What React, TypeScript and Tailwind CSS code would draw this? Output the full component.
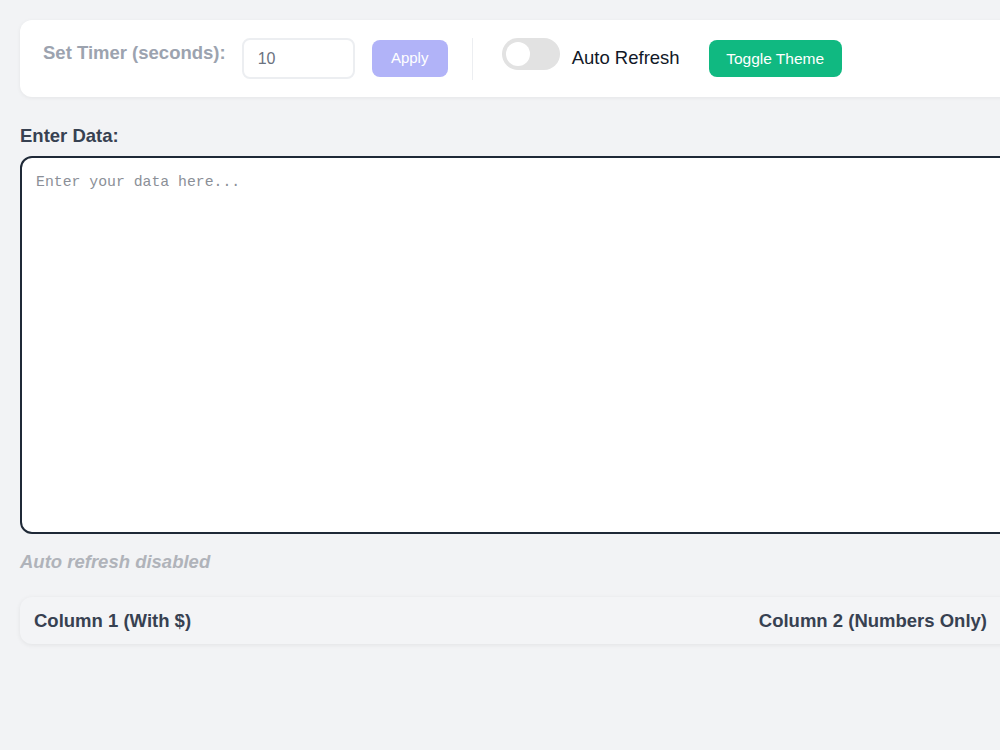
export default function App() {
  return (
    <div className="min-h-screen w-full overflow-hidden bg-[#f2f3f5] pl-5 pt-5 font-['Liberation_Sans',Arial,sans-serif]">
      <div className="w-[1010px]">
        <div className="flex h-[77px] items-center rounded-xl bg-white pl-[23px] shadow-[0_1px_4px_rgba(0,0,0,0.06)]">
          <span className="mb-[12px] text-[18.5px] font-bold text-[#9ca3af]">Set Timer (seconds):</span>
          <input
            defaultValue="10"
            className="ml-[16px] h-[41px] w-[113px] rounded-lg border-2 border-[#eceef1] px-[14px] text-[16px] text-[#6b7280] outline-none"
          />
          <button className="ml-[17px] h-[37px] w-[76px] rounded-lg bg-[#b1b3f8] text-[15px] text-white">
            Apply
          </button>
          <div className="ml-[24px] h-[42px] w-px bg-[#eceef1]" />
          <div className="mb-[10px] ml-[29px] flex h-[32px] w-[58px] items-center rounded-full bg-[#e2e2e2] px-[4px]">
            <div className="h-[24px] w-[24px] rounded-full bg-white" />
          </div>
          <span className="mb-[2px] ml-[12px] text-[18.5px] text-[#111827]">Auto Refresh</span>
          <button className="ml-[29px] h-[37px] w-[133px] rounded-lg bg-[#10b981] text-[15.5px] text-white">
            Toggle Theme
          </button>
        </div>

        <div className="mt-[28px] text-[18.5px] font-bold leading-[22px] text-[#374151]">Enter Data:</div>
        <textarea
          placeholder="Enter your data here..."
          className="mt-[9px] block h-[378px] w-full resize-none rounded-xl border-2 border-[#1f2937] bg-white px-[14px] py-[13px] font-['Liberation_Mono',monospace] text-[14.8px] placeholder:text-[#8b8f97] outline-none"
        />
        <div className="mt-[17px] text-[18.5px] font-bold italic leading-[22px] text-[#b0b3ba]">Auto refresh disabled</div>

        <div className="mt-[24px] flex h-[47px] items-center justify-between rounded-xl bg-[#f3f4f6] pl-[14px] pr-[43px] shadow-[0_1px_5px_rgba(0,0,0,0.07)]">
          <span className="text-[18.5px] font-bold text-[#374151]">Column 1 (With $)</span>
          <span className="text-[18.5px] font-bold text-[#374151]">Column 2 (Numbers Only)</span>
        </div>
      </div>
    </div>
  );
}
